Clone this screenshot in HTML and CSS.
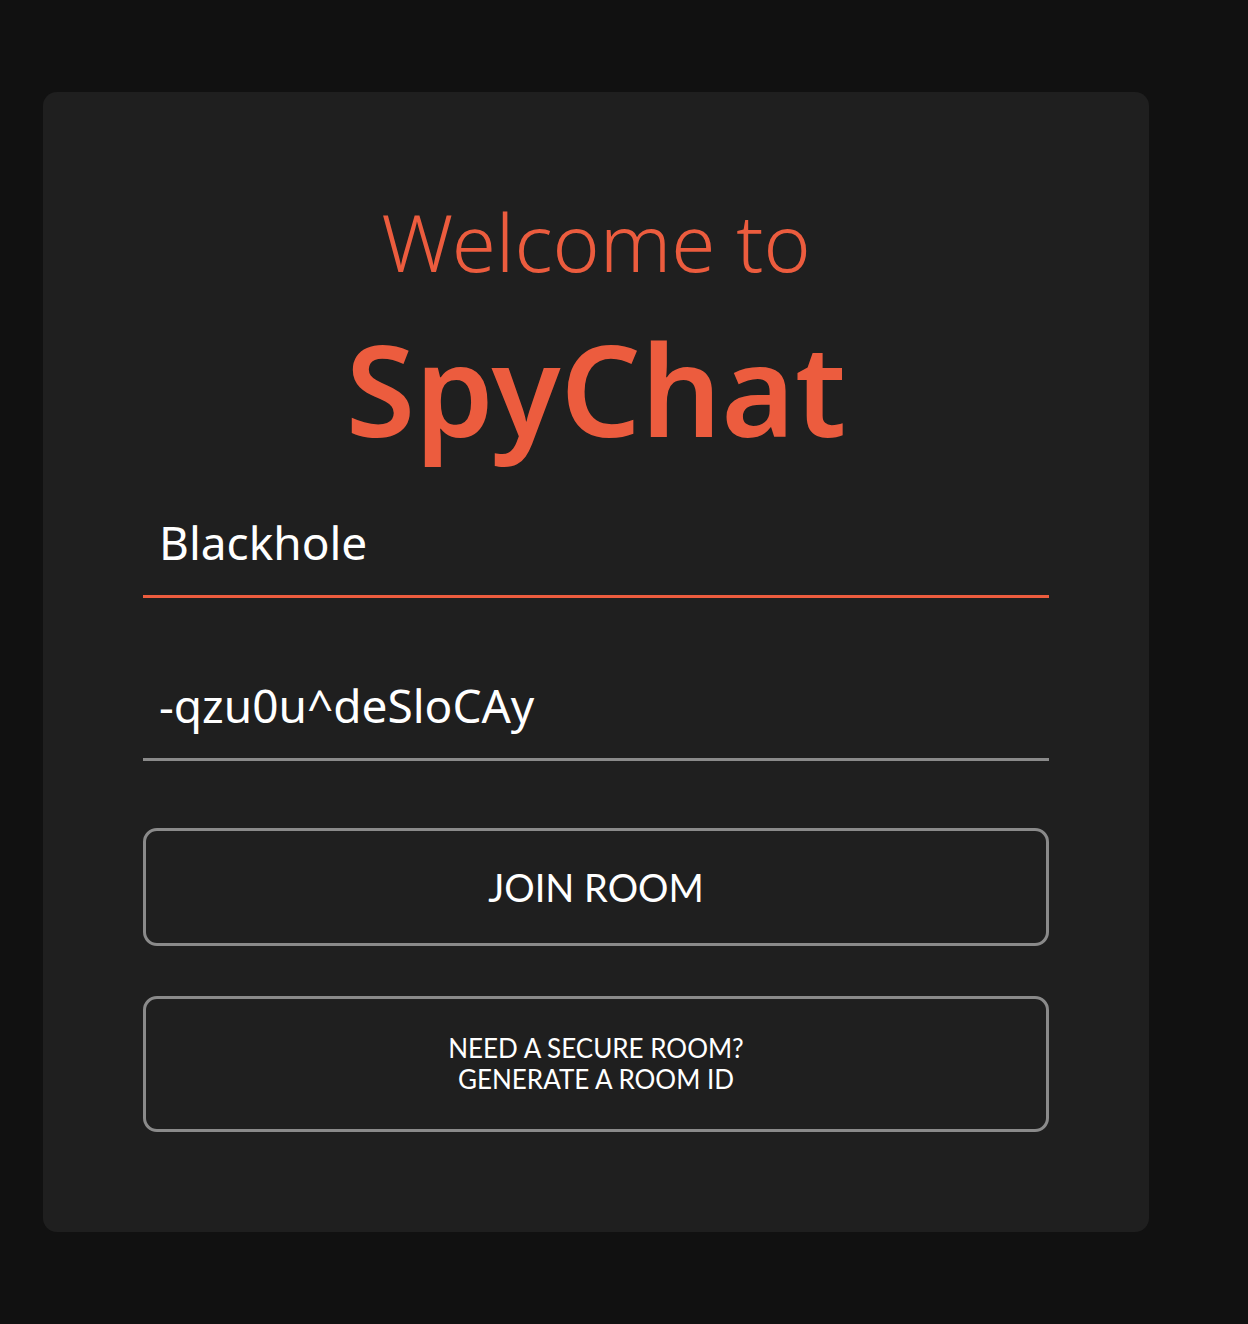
FILE: index.html
```html
<!DOCTYPE html>
<html lang="en">
<head>
<meta charset="utf-8">
<title>SpyChat</title>
<link rel="stylesheet" href="styles.css">
</head>
<body>
<main class="page">
  <section class="card">
    <h1 class="title">
      <span class="title-welcome">Welcome to</span>
      <span class="title-brand">SpyChat</span>
    </h1>
    <form class="form">
      <input class="field field-active" type="text" value="Blackhole" aria-label="Name">
      <input class="field" type="text" value="-qzu0u^deSloCAy" aria-label="Room ID">
      <button class="btn btn-join" type="button">JOIN ROOM</button>
      <button class="btn btn-generate" type="button">NEED A SECURE ROOM?<br>GENERATE A ROOM ID</button>
    </form>
  </section>
</main>
</body>
</html>
```

FILE: styles.css
```css
html, body {
  margin: 0;
  padding: 0;
  background: #111111;
}

.page {
  padding: 92px 0 0 43px;
  min-height: 1324px;
  box-sizing: border-box;
}

.card {
  width: 1106px;
  box-sizing: border-box;
  background: #1f1f1f;
  border-radius: 14px;
  padding: 100px 100px 100px 100px;
}

.title {
  margin: 0;
  display: flex;
  flex-direction: column;
  align-items: center;
  color: #ec5c3e;
  font-family: "Noto Sans", "Lato", sans-serif;
}

.title-welcome {
  font-size: 80px;
  font-weight: 300;
  line-height: 98px;
}

.title-brand {
  font-size: 126px;
  font-weight: 600;
  line-height: 196px;
}

.form {
  display: flex;
  flex-direction: column;
  margin-top: 2px;
}

.field {
  display: block;
  width: 100%;
  box-sizing: border-box;
  height: 110px;
  padding: 0 0 0 16px;
  background: transparent;
  border: none;
  border-bottom: 3px solid #8a8a8a;
  color: #ffffff;
  font-family: "Noto Sans", "Lato", sans-serif;
  font-size: 46px;
  font-weight: 400;
  outline: none;
}

.field + .field {
  margin-top: 53px;
}

.field-active {
  border-bottom-color: #ec5c3e;
}

.btn {
  display: block;
  width: 100%;
  box-sizing: border-box;
  background: transparent;
  border: 3px solid #8a8a8a;
  border-radius: 14px;
  color: #ffffff;
  font-family: "Lato", sans-serif;
  cursor: pointer;
}

.btn-join {
  margin-top: 67px;
  height: 118px;
  font-size: 38px;
}

.btn-generate {
  margin-top: 50px;
  height: 136px;
  font-size: 26px;
  line-height: 31px;
}
```
